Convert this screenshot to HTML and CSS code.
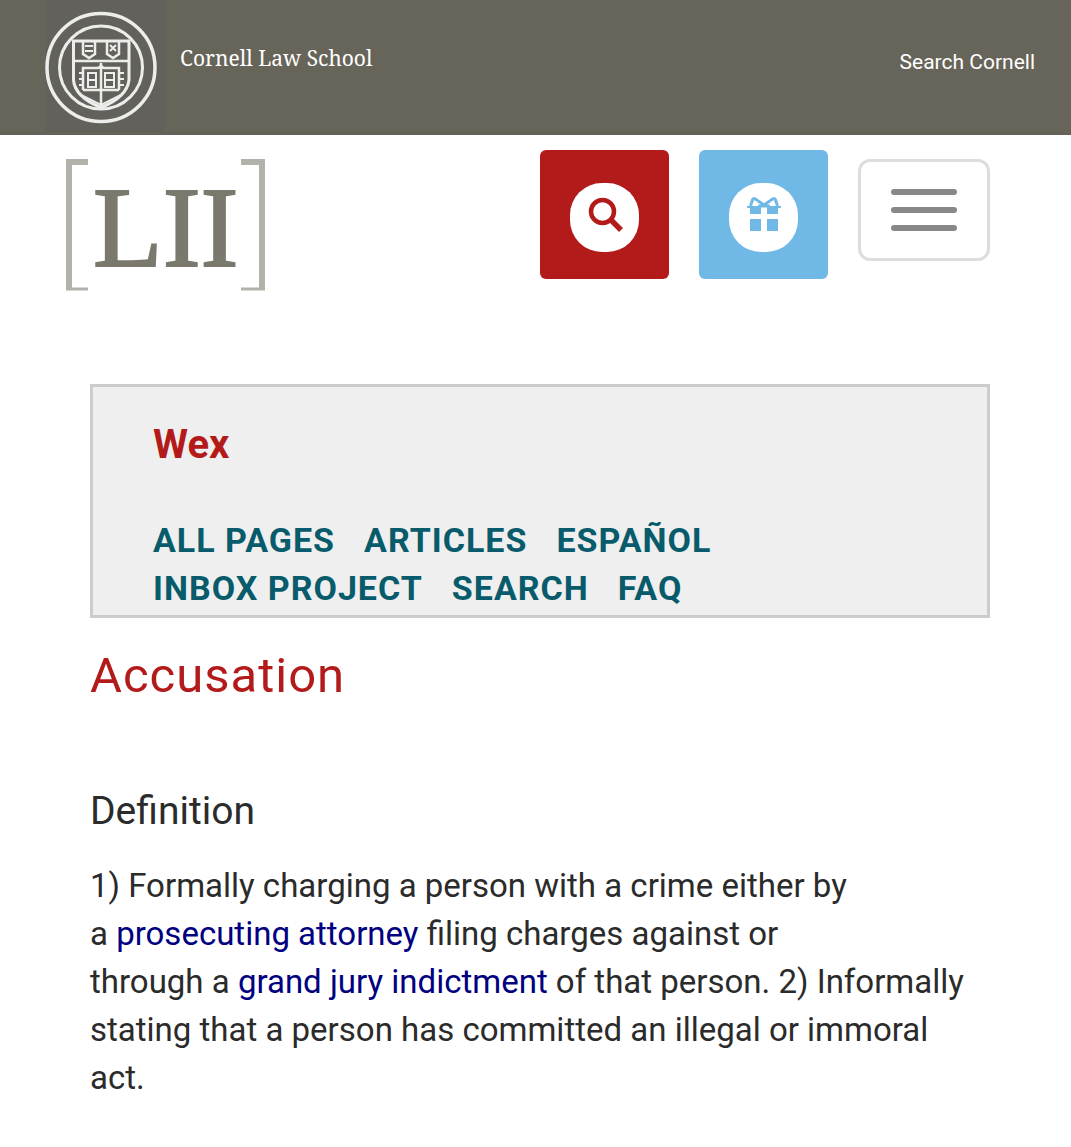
FILE: index.html
```html
<!DOCTYPE html>
<html lang="en">
<head>
<meta charset="utf-8">
<meta name="viewport" content="width=device-width, initial-scale=1">
<title>Accusation | Wex | LII</title>
<link rel="stylesheet" href="styles.css">
</head>
<body>
<header class="topbar">
  <a class="school" href="#">
    <svg class="seal" viewBox="0 0 120 132" aria-hidden="true">
      <g fill="none" stroke="#ededeb" stroke-width="3.500">
        <circle cx="56" cy="67.500" r="54"/>
        <circle cx="56" cy="67.500" r="41.500" stroke-width="3"/>
        <path d="M28.500 41H84V80Q82 97 56 107.500Q30 97 28.500 80Z" stroke-width="3"/>
        <path d="M28 61H84M56 63V107M38 90V68H52Q56 68 56 64Q56 68 60 68H74V90M38 90H74" stroke-width="2.500"/>
        <path d="M38 42V54L44 58L50 54V42M62 42V54L68 58L74 54V42" stroke-width="2.500"/>
        <path d="M40 46H48M40 51H48M65 45L71 51M71 45L65 51M34 73H38M34 79H38M34 85H38M74 73H79M74 79H79M74 85H79M43 73H51V87H43ZM43 80H51M60 73H69V87H60ZM60 80H69M36 95L56 105L76 95" stroke-width="2"/>
      </g>
    </svg>
    <span class="school-name">Cornell Law School</span>
  </a>
  <a class="search-cornell" href="#">Search Cornell</a>
</header>
<div class="masthead">
  <a class="logo" href="#" aria-label="Legal Information Institute">
    <svg class="logo-art" viewBox="0 0 200 133">
      <g fill="none" stroke="#b2b2aa">
        <path stroke-width="6" d="M22 4H3V132M175 4H196V132" />
        <path stroke-width="3" d="M0 131H22M175 131H199" />
      </g>
      <text x="27" y="108" class="logo-text">LII</text>
    </svg>
  </a>
  <div class="actions">
    <button class="tile tile-search" type="button" aria-label="Search">
      <span class="disc"><svg class="icon" viewBox="0 0 36 36" aria-hidden="true"><circle cx="15.500" cy="15.500" r="11.500" fill="none" stroke="currentColor" stroke-width="4.500"/><path d="M23 23L34 34" stroke="currentColor" stroke-width="5.500"/></svg></span>
    </button>
    <button class="tile tile-gift" type="button" aria-label="Donate">
      <span class="disc"><svg class="icon" viewBox="0 0 36 36" aria-hidden="true"><path fill="currentColor" d="M1 10H15V18H4V12H1ZM21 10H35V12H32V18H21ZM4 23H15V35H4ZM21 23H32V35H21Z"/><path d="M4.500 10L6.500 4Q7 2 9.500 3L18 9L26.500 3Q29 2 29.500 4L31.500 10M12 10H24" fill="none" stroke="currentColor" stroke-width="3"/><path d="M6.500 9L8.500 5L13 9ZM29.500 9L27.500 5L23 9Z" fill="#fff"/></svg></span>
    </button>
    <button class="menu" type="button" aria-label="Menu">
      <span class="bar"></span><span class="bar"></span><span class="bar"></span>
    </button>
  </div>
</div>
<main class="content">
  <section class="wex">
    <h2 class="wex-title">Wex</h2>
    <nav class="wex-nav">
      <a href="#">ALL PAGES</a>
      <a href="#">ARTICLES</a>
      <a href="#">ESPAÑOL</a>
      <a href="#">INBOX PROJECT</a>
      <a href="#">SEARCH</a>
      <a href="#">FAQ</a>
    </nav>
  </section>
  <article class="entry">
    <h1 class="entry-title">Accusation</h1>
    <h2 class="entry-heading">Definition</h2>
    <p class="entry-text">1) Formally charging a person with a crime either by a&nbsp;<a href="#">prosecuting attorney</a>&nbsp;filing charges against or through&nbsp;a&nbsp;<a href="#">grand jury indictment</a>&nbsp;of that person. 2) Informally stating that a person has committed an illegal or immoral act.</p>
  </article>
</main>
</body>
</html>
```
FILE: styles.css
```css
* { box-sizing: border-box; }
body {
  margin: 0;
  background: #fff;
  color: #2b2b2b;
  font-family: Roboto, "Liberation Sans", sans-serif;
}
a { text-decoration: none; }
h1, h2, p { margin: 0; font-weight: 400; }

.topbar {
  display: flex;
  justify-content: space-between;
  align-items: flex-start;
  min-height: 135px;
  padding: 0 36px 0 45px;
  background: #676459;
  border-bottom: 2px solid #636158;
}
.school { display: flex; gap: 15px; color: #fff; }
.seal { width: 120px; height: 132px; background: #62615b; }
.school-name {
  padding-top: 44px;
  font: 21px/28px "Noto Serif", "DejaVu Serif Condensed", "DejaVu Serif", serif;
}
.search-cornell {
  padding-top: 48px;
  color: #fff;
  font-size: 21px;
  line-height: 28px;
}

.masthead {
  display: flex;
  justify-content: space-between;
  align-items: flex-start;
  padding: 15px 81px 0 66px;
}
.logo { padding-top: 8px; }
.logo-art { display: block; width: 200px; height: 133px; }
.logo-text {
  fill: #7b796d;
  stroke: #7b796d;
  stroke-width: 2px;
  font: 114px "Liberation Serif", serif;
}
.actions { display: flex; align-items: flex-start; gap: 30px; }
.tile {
  display: grid;
  place-items: center;
  width: 129px;
  height: 129px;
  padding: 5px 0 0;
  border: 0;
  border-radius: 6px;
}
.tile-search { background: #b31b1b; color: #b31b1b; }
.tile-gift { background: #70b9e6; color: #70b9e6; }
.disc {
  display: grid;
  place-items: center;
  width: 69px;
  height: 69px;
  padding-bottom: 6px;
  border-radius: 32px;
  background: #fff;
}
.icon { display: block; width: 36px; height: 36px; }
.menu {
  display: flex;
  flex-direction: column;
  align-items: center;
  justify-content: center;
  gap: 12px;
  width: 132px;
  height: 102px;
  margin-top: 9px;
  padding: 0;
  border: 3px solid #ddd;
  border-radius: 12px;
  background: #fff;
}
.bar { width: 66px; height: 6px; border-radius: 3px; background: #888; }

.content { padding: 93px 81px 48px 90px; }
.wex {
  padding: 30px 60px 0;
  border: 3px solid #ccc;
  background: #efefef;
}
.wex-title {
  color: #b31b1b;
  font-size: 40px;
  font-weight: 700;
  line-height: 56px;
}
.wex-nav {
  display: flex;
  flex-wrap: wrap;
  gap: 0 29px;
  max-width: 640px;
  padding: 43px 0 3px;
  font-size: 34px;
  font-weight: 700;
  line-height: 48px;
  letter-spacing: 1px;
}
.wex-nav a { color: #085b6b; }
.entry-title {
  padding-top: 28px;
  color: #b31b1b;
  font-size: 49px;
  line-height: 60px;
  letter-spacing: 1px;
}
.entry-heading {
  padding-top: 80px;
  font-size: 39px;
  line-height: 50px;
}
.entry-text {
  max-width: 880px;
  padding-top: 26px;
  font-size: 33px;
  line-height: 48px;
}
.entry-text a { color: #000080; }
```
